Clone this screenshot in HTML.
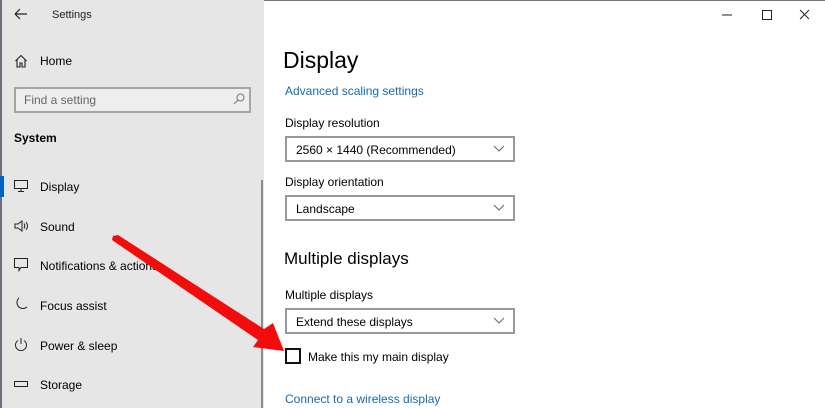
<!DOCTYPE html>
<html><head><meta charset="utf-8"><style>
*{margin:0;padding:0;box-sizing:border-box}
body{width:825px;height:408px;overflow:hidden;background:#fff;font-family:"Liberation Sans",sans-serif;position:relative;color:#000}
.side{position:absolute;left:0;top:0;width:264px;height:408px;background:#e6e6e6}
.t{position:absolute;white-space:nowrap}
.s13{font-size:12px}
.dd{position:absolute;left:285px;width:230px;height:26px;border:2px solid #999;background:#fff;font-size:12px;padding:5px 0 0 9px}
.dd svg{position:absolute;right:8px;top:7px}
.ico{position:absolute;left:14px}
</style></head><body>
<div style="position:absolute;left:0;top:0;width:825px;height:1px;background:#777"></div>
<div class="side"></div>
<div style="position:absolute;left:0;top:0;width:2px;height:408px;background:#6b6f7a"></div>
<svg class="t" style="left:14px;top:8px" width="14" height="12"><path d="M1 6H13M1 6L6 1M1 6L6 11" stroke="#222" stroke-width="1.2" fill="none"/></svg>
<div class="t" style="left:52px;top:9px;font-size:11px;color:#222">Settings</div>
<svg class="ico" style="top:54px" width="14" height="14"><path d="M1.5 7L7 1.5 12.5 7M3 5.5V13H6V9H8V13H11V5.5" stroke="#222" stroke-width="1.1" fill="none"/></svg>
<div class="t s13" style="left:40px;top:54px">Home</div>
<div style="position:absolute;left:14px;top:87px;width:237px;height:26px;border:2px solid #a5a5a5;background:#eee"></div>
<div class="t s13" style="left:24px;top:93px;color:#666">Find a setting</div>
<svg class="t" style="left:233px;top:93px" width="12" height="12"><circle cx="7.5" cy="4.5" r="3.5" stroke="#777" fill="none"/><path d="M5 7L1 11" stroke="#777"/></svg>
<div class="t" style="left:14px;top:131px;font-size:12px;font-weight:bold">System</div>
<div style="position:absolute;left:0;top:176px;width:4px;height:21px;background:#0067c0"></div>
<svg class="ico" style="top:180px" width="14" height="12"><rect x="0.5" y="0.5" width="13" height="8" stroke="#222" fill="none"/><path d="M7 9v2M4 11.5h6" stroke="#222"/></svg>
<div class="t s13" style="left:40px;top:180px">Display</div>
<svg class="ico" style="top:219px" width="16" height="14"><path d="M1 5h3l4-3v10l-4-3H1z" stroke="#222" fill="none"/><path d="M10 4.5q1.5 2.5 0 5M12 3q3 4 0 8" stroke="#222" fill="none"/></svg>
<div class="t s13" style="left:40px;top:220px">Sound</div>
<svg class="ico" style="top:258px" width="14" height="14"><path d="M0.5 0.5h13v9H7l-2 3v-3H0.5z" stroke="#222" fill="none"/></svg>
<div class="t s13" style="left:40px;top:259px">Notifications &amp; actions</div>
<svg class="ico" style="top:297px" width="14" height="14"><path d="M5 1a6 6 0 1 0 8 9A6 6 0 0 1 5 1z" stroke="#222" fill="none"/></svg>
<div class="t s13" style="left:40px;top:299px">Focus assist</div>
<svg class="ico" style="top:337px" width="14" height="14"><path d="M4 3.5a5.5 5.5 0 1 0 6 0M7 1v6" stroke="#222" fill="none"/></svg>
<div class="t s13" style="left:40px;top:339px">Power &amp; sleep</div>
<svg class="ico" style="top:380px" width="14" height="8"><rect x="0.5" y="1.5" width="13" height="5" stroke="#222" fill="none"/></svg>
<div class="t s13" style="left:40px;top:378px">Storage</div>
<div style="position:absolute;left:261px;top:180px;width:2px;height:228px;background:#8a8a8a"></div>

<svg class="t" style="left:720px;top:8px" width="100" height="14"><path d="M2 7h10" stroke="#222"/><rect x="42.5" y="2.5" width="9" height="9" stroke="#222" fill="none"/><path d="M80 2l9 9M89 2l-9 9" stroke="#222"/></svg>

<div class="t" style="left:283px;top:47px;font-size:23px">Display</div>
<div class="t s13" style="left:285px;top:84px;color:#1a6ba8">Advanced scaling settings</div>
<div class="t s13" style="left:285px;top:116px">Display resolution</div>
<div class="dd" style="top:136px">2560 × 1440 (Recommended)<svg width="12" height="8"><path d="M1 1l5 5 5-5" stroke="#666" fill="none"/></svg></div>
<div class="t s13" style="left:285px;top:175px">Display orientation</div>
<div class="dd" style="top:195px">Landscape<svg width="12" height="8"><path d="M1 1l5 5 5-5" stroke="#666" fill="none"/></svg></div>
<div class="t" style="left:284px;top:249px;font-size:17px">Multiple displays</div>
<div class="t s13" style="left:285px;top:288px">Multiple displays</div>
<div class="dd" style="top:308px">Extend these displays<svg width="12" height="8"><path d="M1 1l5 5 5-5" stroke="#666" fill="none"/></svg></div>
<div style="position:absolute;left:285px;top:348px;width:16px;height:16px;border:2px solid #111"></div>
<div class="t s13" style="left:308px;top:350px">Make this my main display</div>
<div class="t s13" style="left:285px;top:392px;color:#1a6ba8">Connect to a wireless display</div>

<svg style="position:absolute;left:0;top:0" width="825" height="408"><polygon points="113,236 118,235 264,329 273,323 284,351 253,347 258,340 112,240" fill="#f20d0d"/></svg>
</body></html>
